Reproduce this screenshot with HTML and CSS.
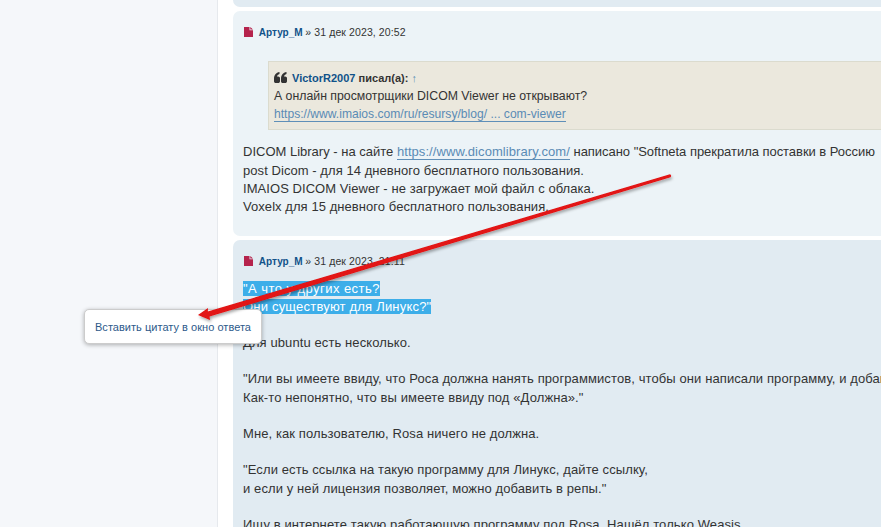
FILE: index.html
```html
<!DOCTYPE html>
<html lang="ru">
<head>
<meta charset="utf-8">
<title>Форум</title>
<link rel="stylesheet" href="styles.css">
</head>
<body>
<div class="page">
  <aside class="sidebar"></aside>
  <main class="main">
    <div class="post post-dark stub"></div>
    <article class="post post-light first">
      <div class="meta">
        <svg class="file" viewBox="0 0 9 10"><path d="M0 0H5.500V3.200H9V10H0ZM6.300 0L9 2.400H6.300Z"/></svg>
        <a class="author">Артур_М</a> <span class="date">» 31 дек 2023, 20:52</span>
      </div>
      <blockquote class="quote">
        <div class="cite">
          <svg class="qicon" viewBox="0 0 13 11"><path d="M0 7C0 3 2 .8 5.500 0V2C4 2.600 3.200 3.400 3 4.500H4.200C5.200 4.500 6 5.300 6 6.300V9.200C6 10.200 5.200 11 4.200 11H1.800C.8 11 0 10.200 0 9.200Z"/><path d="M7 7C7 3 9 .8 12.500 0V2C11 2.600 10.200 3.400 10 4.500H11.200C12.200 4.500 13 5.300 13 6.300V9.200C13 10.200 12.200 11 11.200 11H8.800C7.800 11 7 10.200 7 9.200Z"/></svg>
          <a class="author-q">VictorR2007</a> писал(а): <span class="up">↑</span>
        </div>
        <div class="qtext">А онлайн просмотрщики DICOM Viewer не открывают?</div>
        <div class="qtext"><a class="link qlink">https://www.imaios.com/ru/resursy/blog/ ... com-viewer</a></div>
      </blockquote>
      <div class="content">
        <div class="para-first">DICOM Library - на сайте <a class="link wide">https://www.dicomlibrary.com/</a> <span class="tail">написано "Softneta прекратила поставки в Россию</span></div>
        <div class="line">post Dicom - для 14 дневного бесплатного пользования.</div>
        <div class="line">IMAIOS DICOM Viewer - не загружает мой файл с облака.</div>
        <div class="line">Voxelx для 15 дневного бесплатного пользования.</div>
      </div>
    </article>
    <article class="post post-dark second">
      <div class="meta">
        <svg class="file" viewBox="0 0 9 10"><path d="M0 0H5.500V3.200H9V10H0ZM6.300 0L9 2.400H6.300Z"/></svg>
        <a class="author">Артур_М</a> <span class="date">» 31 дек 2023, 21:11</span>
      </div>
      <div class="content body2">
        <div><span class="sel sel-a">"А что у других есть?</span></div>
        <div><span class="sel sel-b">Они существуют для Линукс?"</span></div>
        <div class="gap">Для ubuntu есть несколько.</div>
        <div class="gap">"Или вы имеете ввиду, что Роса должна нанять программистов, чтобы они написали программу, и добавить её в репы?</div>
        <div>Как-то непонятно, что вы имеете ввиду под «Должна»."</div>
        <div class="gap">Мне, как пользователю, Rosa ничего не должна.</div>
        <div class="gap">"Если есть ссылка на такую программу для Линукс, дайте ссылку,</div>
        <div>и если у ней лицензия позволяет, можно добавить в репы."</div>
        <div class="gap">Ищу в интернете такую работающую программу под Rosa. Нашёл только Weasis.</div>
      </div>
    </article>
  </main>
</div>
<div class="popup"><a>Вставить цитату в окно ответа</a></div>
<svg class="arrow" viewBox="0 0 881 527" width="881" height="527">
  <defs><filter id="sh" x="-10%" y="-30%" width="120%" height="170%"><feDropShadow dx="1" dy="2" stdDeviation="1.500" flood-color="#000" flood-opacity=".35"/></filter></defs>
  <g filter="url(#sh)"><path d="M670 174.200Q672 175.500 670.500 177.200L209.500 316.500L210 320L198 315L208 308L207.800 311.500Z" fill="#e21212"/></g>
</svg>
</body>
</html>
```
FILE: styles.css
```css
html, body { margin: 0; padding: 0; height: 100%; overflow: hidden; }
body { background: #fff; font-family: "Liberation Sans", Arial, sans-serif; color: #333; width: 881px; height: 527px; position: relative; }
.page { display: flex; height: 527px; overflow: hidden; }
.sidebar { flex: 0 0 217px; background: #f5f7fa; border-right: 1px solid #e6e9ed; }
.main { flex: 0 0 auto; width: 1000px; padding-left: 15px; }
.post { border-radius: 7px; box-sizing: border-box; padding: 0 10px; }
.post-dark { background: #e1ebf2; }
.post-light { background: #ecf3f7; }
.stub { height: 7px; border-radius: 0 0 7px 7px; margin-bottom: 4px; }
.first { height: 225px; margin-bottom: 4px; padding-top: 15px; }
.second { height: 400px; padding-top: 15px; }
.meta { font-size: 10px; line-height: 13px; color: #333; white-space: nowrap; }
.date { font-size: 10.500px; letter-spacing: .1px; }
.file { width: 9px; height: 10px; fill: #b5234c; margin: 0 3px 0 1px; vertical-align: -1px; }
.author { color: #105289; font-weight: bold; }
.quote { margin: 22px 0 0 25px; background: #ebe8dd; border: 1px solid #dbdbce; padding: 7px 5px 0; width: 800px; height: 69px; box-sizing: border-box; }
.cite { font-weight: bold; font-size: 11px; line-height: 18px; white-space: nowrap; }
.qicon { width: 13px; height: 11px; fill: #333; margin-right: 2px; vertical-align: -1px; }
.qtext { font-size: 12.300px; line-height: 18px; white-space: nowrap; }
.author-q { color: #105289; }
.up { color: #5b8fb5; font-weight: normal; }
.link { color: #5a8bb5; border-bottom: 1px solid #5f8fb8; }
.qlink { font-size: 12.100px; }
.wide { letter-spacing: .07px; }
.tail { letter-spacing: -.04px; }
.line { letter-spacing: .06px; }
.content { font-size: 13px; line-height: 18.200px; white-space: nowrap; margin-top: 12px; }
.para-first { line-height: 20px; }
.body2 { margin-top: 11.500px; letter-spacing: .1px; }
.gap { margin-top: 18.200px; }
.sel { background: #3daee9; color: #fff; }
.sel-a { letter-spacing: .45px; }
.sel-b { letter-spacing: .2px; }
.popup { position: absolute; left: 84px; top: 309px; width: 178px; height: 35px; box-sizing: border-box; background: #fff; border: 1px solid #ccc; border-radius: 5px; box-shadow: 0 1px 4px rgba(0,0,0,.3); font-size: 11px; letter-spacing: .03px; line-height: 35px; padding-left: 10px; color: #2d5a8a; white-space: nowrap; }
.arrow { position: absolute; left: 0; top: 0; pointer-events: none; }
```
